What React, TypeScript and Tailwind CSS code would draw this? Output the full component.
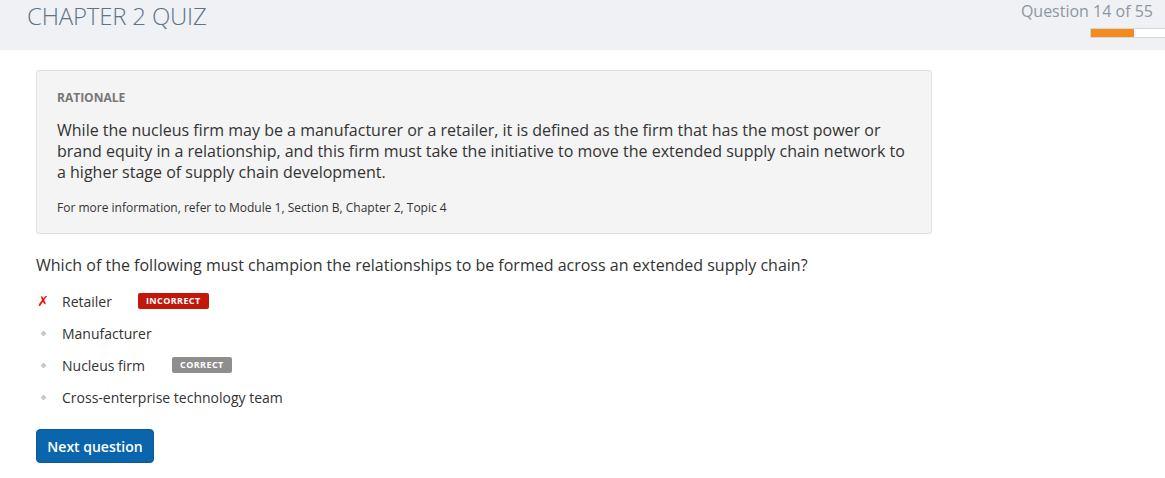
import React from "react";

const Dot = () => (
  <span className="w-[14px] flex justify-center">
    <svg width="7" height="7" viewBox="0 0 7 7">
      <path d="M3.5 0.5 L6.5 3.5 L3.5 6.5 L0.5 3.5 Z" fill="#c8c8c8" />
    </svg>
  </span>
);

const Cross = () => (
  <span className="w-[14px] flex justify-center text-[#e3120b] text-[14px] font-bold leading-none" style={{ fontFamily: "'DejaVu Sans', sans-serif" }}>
    ✗
  </span>
);

export default function App() {
  return (
    <div className="w-[1165px] h-[478px] bg-white text-[#333] overflow-hidden" style={{ fontFamily: "'Open Sans', sans-serif" }}>
      <div className="h-[50px] bg-[#f0f1f5] flex justify-between">
        <h1 className="pl-[27px] pt-0 text-[24px] font-light text-[#5f7385] leading-[32px] tracking-[-0.2px]">CHAPTER 2 QUIZ</h1>
        <div className="flex flex-col items-end">
          <div className="pr-[12px] text-[16px] text-[#8f969e] leading-[22px] pt-0">Question 14 of 55</div>
          <div className="mt-[6px] w-[75px] h-[10px] bg-white border border-[#d4d6d9] border-r-0 flex">
            <div className="w-[43px] h-full bg-[#f38b1f]" />
          </div>
        </div>
      </div>

      <div className="pl-[36px] pt-[20px]">
        <div className="w-[896px] bg-[#f4f4f4] border border-[#e0e0e0] rounded-[3px] px-[20px] pt-[18px] pb-[17px]">
          <div className="text-[12px] font-bold text-[#777] leading-[18px]">RATIONALE</div>
          <p className="mt-[13px] text-[16px] leading-[21px] text-[#333]">
            While the nucleus firm may be a manufacturer or a retailer, it is defined as the firm that has the most power or brand equity in a relationship, and this firm must take the initiative to move the extended supply chain network to a higher stage of supply chain development.
          </p>
          <p className="mt-[16px] text-[12px] leading-[17px] text-[#333]">For more information, refer to Module 1, Section B, Chapter 2, Topic 4</p>
        </div>

        <div className="mt-[20px] text-[16px] leading-[22px] text-[#333]">
          Which of the following must champion the relationships to be formed across an extended supply chain?
        </div>

        <ul className="mt-[9px] flex flex-col">
          <li className="h-[32px] flex items-center">
            <Cross />
            <span className="ml-[12px] text-[14px] text-[#333]">Retailer</span>
            <span className="ml-[26px] bg-[#c4170b] text-white text-[9px] font-bold tracking-[0.4px] rounded-[2px] px-[8px] h-[16px] flex items-center">INCORRECT</span>
          </li>
          <li className="h-[32px] flex items-center">
            <Dot />
            <span className="ml-[12px] text-[14px] text-[#333]">Manufacturer</span>
          </li>
          <li className="h-[32px] flex items-center">
            <Dot />
            <span className="ml-[12px] text-[14px] text-[#333]">Nucleus firm</span>
            <span className="ml-[27px] bg-[#8e8e8e] text-white text-[9px] font-bold tracking-[0.4px] rounded-[2px] px-[8px] h-[16px] flex items-center">CORRECT</span>
          </li>
          <li className="h-[32px] flex items-center">
            <Dot />
            <span className="ml-[12px] text-[14px] text-[#333]">Cross-enterprise technology team</span>
          </li>
        </ul>

        <button className="mt-[16px] w-[118px] h-[34px] bg-[#0b65ad] border border-[#0a5a99] rounded-[4px] text-white text-[14px] font-semibold">
          Next question
        </button>
      </div>
    </div>
  );
}
